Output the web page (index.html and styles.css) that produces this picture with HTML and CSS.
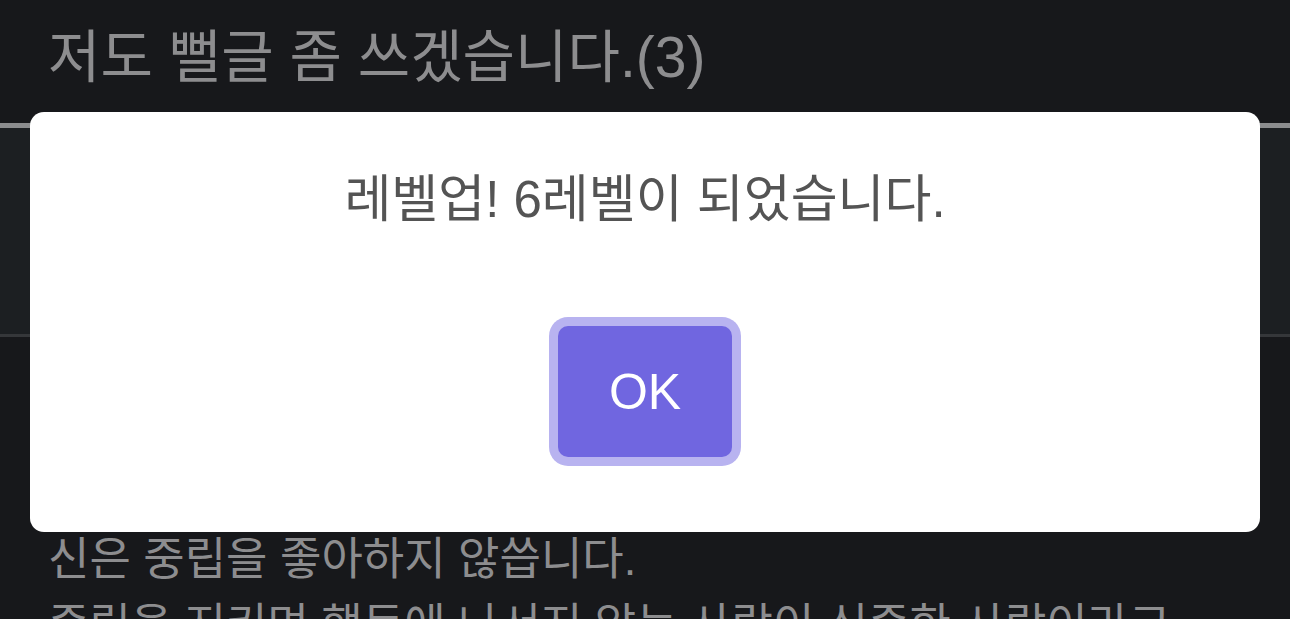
FILE: index.html
```html
<!DOCTYPE html>
<html lang="ko">
<head>
    <meta charset="utf-8">
    <title>저도 뻘글 좀 쓰겠습니다.(3)</title>
    <link rel="stylesheet" href="styles.css">
</head>
<body>
    <h1 class="post-title">저도 뻘글 좀 쓰겠습니다.(3)</h1>

    <!-- post meta box, hidden behind the alert -->
    <div class="post-info"></div>

    <div class="post-body">
        <p>신은 중립을 좋아하지 않씁니다.</p>
        <p>중립을 지키며 행동에 나서지 않는 사람이 신중한 사람이라고</p>
    </div>

    <!-- level up alert -->
    <div class="alert-backdrop">
        <div class="alert">
            <div class="alert-text">레벨업! 6레벨이 되었습니다.</div>
            <button class="alert-ok" autofocus>OK</button>
        </div>
    </div>
</body>
</html>
```

FILE: styles.css
```css
html, body {
    height: 100%;
}

body {
    margin: 0;
    overflow: hidden;
    background-color: #17181b;
    font-family: "Liberation Sans", "Noto Sans CJK KR", sans-serif;
}

.post-title {
    margin: 0;
    padding: 24px 48px 0 48px;
    height: 101px;
    box-sizing: border-box;
    font-size: 57px;
    font-weight: normal;
    line-height: 66px;
    color: #8d8d8f;
    white-space: nowrap;
}

.post-info {
    margin-top: 22px;
    height: 206px;
    border-top: 5px solid #8b8c8e;
    border-bottom: 3px solid #35373a;
    background-color: #1c1f22;
}

.post-body {
    padding: 190px 48px 0 48px;
}

.post-body p {
    margin: 0;
    font-size: 45px;
    line-height: 66px;
    color: #8d8d8f;
    white-space: nowrap;
}

/* alert overlay */
.alert-backdrop {
    position: fixed;
    top: 0;
    left: 0;
    right: 0;
    bottom: 0;
    padding: 112px 30px 0 30px;
}

.alert {
    height: 420px;
    background: white;
    border-radius: 14px;
    display: flex;
    flex-direction: column;
    align-items: center;
}

.alert-text {
    margin-top: 59px;
    font-size: 51px;
    line-height: 58px;
    color: #545454;
    white-space: nowrap;
}

.alert-ok {
    margin-top: 97px;
    width: 174px;
    height: 131px;
    border: none;
    border-radius: 10px;
    background-color: #7066e0;
    color: white;
    font-family: "Liberation Sans", sans-serif;
    font-size: 50px;
    box-shadow: 0 0 0 9px #b8b3f0;
    outline: none;
    cursor: pointer;
}
```
